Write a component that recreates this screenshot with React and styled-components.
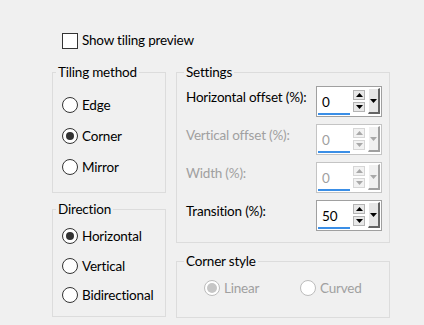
import React from 'react';
import styled, { createGlobalStyle } from 'styled-components';

const GlobalStyle = createGlobalStyle`
  html, body {
    margin: 0;
    padding: 0;
    background: #f0f0f0;
  }
  #root {
    width: 424px;
    height: 325px;
    overflow: hidden;
  }
`;

const Page = styled.div`
  display: flex;
  flex-direction: column;
  padding: 32px 0 0 52px;
  font-family: Lato, "Noto Sans", sans-serif;
  font-size: 13.5px;
  letter-spacing: -0.2px;
  color: #000;
`;

const CheckRow = styled.label`
  display: flex;
  align-items: center;
  gap: 4px;
  height: 17px;
  line-height: 17px;
  margin-left: 10px;
`;

const CheckBox = styled.span`
  box-sizing: border-box;
  width: 16px;
  height: 16px;
  border: 1px solid #333;
  background: #fff;
`;

const Columns = styled.div`
  display: flex;
  gap: 10px;
  margin-top: 15px;
`;

const Column = styled.div`
  display: flex;
  flex-direction: column;
  width: ${(p) => p.$width}px;
  gap: ${(p) => p.$gap}px;
`;

const Group = styled.fieldset`
  margin: 0;
  padding: 0;
  min-width: 0;
  border: 1px solid #dcdcdc;
`;

const Legend = styled.legend`
  margin-left: ${(p) => p.$indent}px;
  padding: 0 2px;
  height: 16px;
  line-height: 16px;
`;

const RadioList = styled.div`
  display: flex;
  flex-direction: column;
  gap: ${(p) => p.$gap}px;
  padding: ${(p) => p.$top}px 0 ${(p) => p.$bottom}px 9px;
`;

const RadioRow = styled.label`
  display: flex;
  align-items: center;
  gap: 4px;
  height: 16px;
  line-height: 16px;
  color: ${(p) => (p.$disabled ? '#a0a0a0' : '#000')};
`;

const Circle = styled.span`
  box-sizing: border-box;
  display: flex;
  align-items: center;
  justify-content: center;
  width: 16px;
  height: 16px;
  border-radius: 50%;
  border: 1px solid ${(p) => (p.$disabled ? '#bcbcbc' : '#333')};
  background: #fff;

  &::after {
    content: '';
    display: ${(p) => (p.$checked ? 'block' : 'none')};
    width: ${(p) => (p.$disabled ? 10 : 8)}px;
    height: ${(p) => (p.$disabled ? 10 : 8)}px;
    border-radius: 50%;
    background: ${(p) => (p.$disabled ? '#c6c6c6' : '#333')};
  }
`;

const Rows = styled.div`
  display: flex;
  flex-direction: column;
  gap: 7px;
  padding: 6px 7px 11px 9px;
`;

const SettingRow = styled.div`
  display: flex;
  height: 31px;
`;

const Label = styled.span`
  flex: 1;
  margin-top: 3px;
  line-height: 16px;
  height: 16px;
  white-space: nowrap;
  color: ${(p) => (p.$disabled ? '#a0a0a0' : '#000')};
`;

const SpinBox = styled.div`
  box-sizing: border-box;
  display: flex;
  width: 66px;
  height: 31px;
  border: 1px solid ${(p) => (p.$disabled ? '#c4c4c4' : '#a0a0a0')};
  background: #fff;
`;

const Field = styled.div`
  box-sizing: border-box;
  width: 32px;
  height: 28px;
  margin-left: 1px;
  padding: 7px 0 0 4px;
  line-height: 16px;
  border-bottom: 2px solid #3a8ee6;
  color: ${(p) => (p.$disabled ? '#a0a0a0' : '#000')};
`;

const Spinner = styled.div`
  display: flex;
  flex-direction: column;
  gap: 2px;
  margin: 3px 0 0 3px;
`;

const SpinButton = styled.div`
  box-sizing: border-box;
  display: flex;
  align-items: center;
  justify-content: center;
  width: 12px;
  height: 10px;
  border: 1px solid ${(p) => (p.$disabled ? '#d6d6d6' : '#b4b4b4')};
  background: ${(p) => (p.$disabled ? '#f2f2f2' : '#e8e8e8')};
`;

const DropButton = styled.div`
  box-sizing: border-box;
  display: flex;
  align-items: center;
  justify-content: center;
  width: 12px;
  height: 26px;
  margin: 1px 0 0 3px;
  background: ${(p) => (p.$disabled ? '#f0f0f0' : '#e6e6e6')};
  border-top: 1px solid #fff;
  border-left: 1px solid #fff;
  border-right: 2px solid ${(p) => (p.$disabled ? '#a0a0a0' : '#646464')};
  border-bottom: 2px solid ${(p) => (p.$disabled ? '#a0a0a0' : '#646464')};
`;

const CornerList = styled.div`
  display: grid;
  grid-template-columns: 96px 96px;
  padding: 11px 0 21px 27px;
`;

function Arrow({ up, color }) {
  return (
    <svg width="7" height="4" viewBox="0 0 7 4">
      <polygon points={up ? '0,4 7,4 3.5,0' : '0,0 7,0 3.5,4'} fill={color} />
    </svg>
  );
}

function Radio({ label, checked, disabled }) {
  return (
    <RadioRow $disabled={disabled}>
      <Circle $checked={checked} $disabled={disabled} />
      {label}
    </RadioRow>
  );
}

function Setting({ label, value, disabled }) {
  const arrow = disabled ? '#a8a8a8' : '#000';
  return (
    <SettingRow>
      <Label $disabled={disabled}>{label}</Label>
      <SpinBox $disabled={disabled}>
        <Field $disabled={disabled}>{value}</Field>
        <Spinner>
          <SpinButton $disabled={disabled}><Arrow up color={arrow} /></SpinButton>
          <SpinButton $disabled={disabled}><Arrow color={arrow} /></SpinButton>
        </Spinner>
        <DropButton $disabled={disabled}><Arrow color={arrow} /></DropButton>
      </SpinBox>
    </SettingRow>
  );
}

export default function App() {
  return (
    <>
      <GlobalStyle />
      <Page>
        <CheckRow>
          <CheckBox />
          Show tiling preview
        </CheckRow>
        <Columns>
          <Column $width={114} $gap={8}>
            <Group>
              <Legend $indent={3}>Tiling method</Legend>
              <RadioList $gap={15} $top={17} $bottom={17}>
                <Radio label="Edge" />
                <Radio label="Corner" checked />
                <Radio label="Mirror" />
              </RadioList>
            </Group>
            <Group>
              <Legend $indent={3}>Direction</Legend>
              <RadioList $gap={13.5} $top={11} $bottom={13}>
                <Radio label="Horizontal" checked />
                <Radio label="Vertical" />
                <Radio label="Bidirectional" />
              </RadioList>
            </Group>
          </Column>
          <Column $width={214} $gap={10}>
            <Group>
              <Legend $indent={7}>Settings</Legend>
              <Rows>
                <Setting label="Horizontal offset (%):" value="0" />
                <Setting label="Vertical offset (%):" value="0" disabled />
                <Setting label="Width (%):" value="0" disabled />
                <Setting label="Transition (%):" value="50" />
              </Rows>
            </Group>
            <Group>
              <Legend $indent={7}>Corner style</Legend>
              <CornerList>
                <Radio label="Linear" checked disabled />
                <Radio label="Curved" disabled />
              </CornerList>
            </Group>
          </Column>
        </Columns>
      </Page>
    </>
  );
}
